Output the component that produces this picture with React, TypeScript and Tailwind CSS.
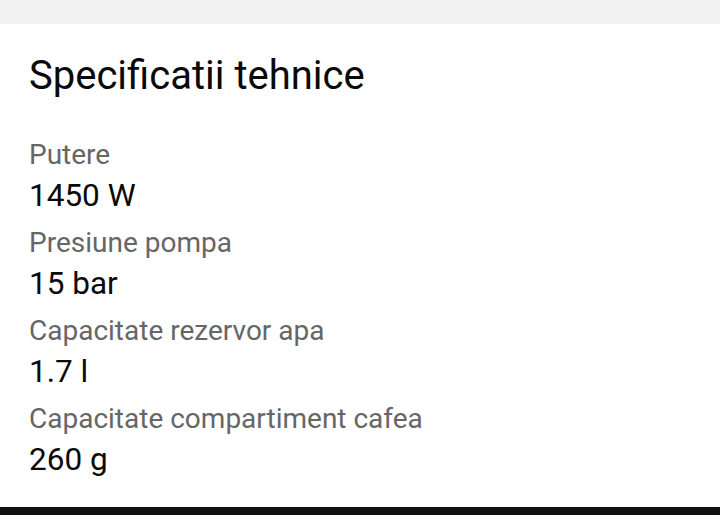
export default function App() {
  const rows = [
    ["Putere", "1450 W"],
    ["Presiune pompa", "15 bar"],
    ["Capacitate rezervor apa", "1.7 l"],
    ["Capacitate compartiment cafea", "260 g"],
  ];
  return (
    <div className="w-[720px] h-[515px] flex flex-col bg-[#f2f2f2] overflow-hidden" style={{ fontFamily: "Roboto, sans-serif" }}>
      <div className="h-[24px] shrink-0" />
      <div className="flex-1 bg-white px-[29px] pt-[28px]">
        <h1 className="text-[40px] leading-[48px] text-[#0a0a0a] font-normal">Specificatii tehnice</h1>
        <div className="mt-[37px] flex flex-col">
          {rows.map(([l, v]) => (
            <div key={l} className="flex flex-col mb-[6px]">
              <div className="text-[28px] leading-[36px] text-[#666666]">{l}</div>
              <div className="text-[31.5px] leading-[46px] text-[#0a0a0a]">{v}</div>
            </div>
          ))}
        </div>
      </div>
      <div className="h-[8px] shrink-0 bg-[#111]" />
    </div>
  );
}
